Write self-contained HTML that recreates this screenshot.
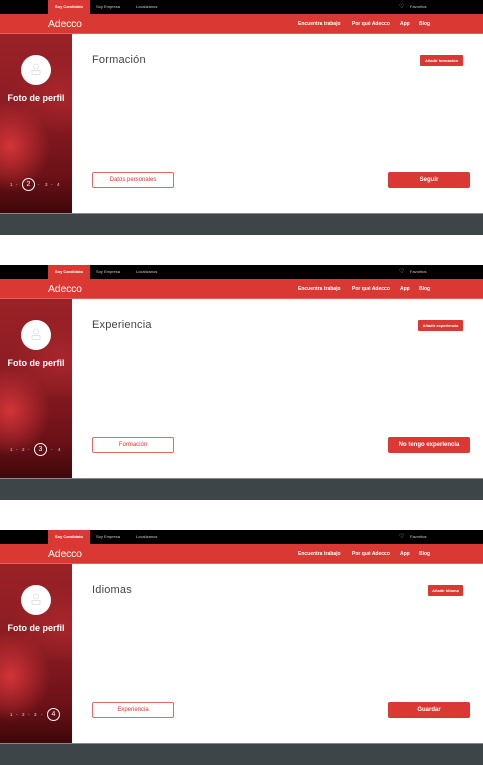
<!DOCTYPE html>
<html><head><meta charset="utf-8"><style>
*{margin:0;padding:0;box-sizing:border-box}
body{width:483px;height:765px;background:#fff;position:relative;overflow:hidden;font-family:"Liberation Sans",sans-serif}
.s{position:absolute;left:0;width:483px;height:235px}
.a{position:absolute;white-space:nowrap}
.top{left:0;top:0;width:483px;height:14px;background:#000}
.tab{left:48px;top:0;width:42px;height:14px;background:#da3832;color:#fff;font-size:4px;font-weight:bold;text-align:center;line-height:14px}
.tl{color:#ccc;font-size:4px;top:0;line-height:14px}
.nav{left:0;top:14px;width:483px;height:20px;background:#da3832;border-bottom:1px solid #e9605a}
.nl{color:#fff;font-size:5px;font-weight:bold;top:14px;line-height:20px}
.logo{left:48px;top:14px;line-height:20px;color:#fff;font-size:10.5px;letter-spacing:-0.2px}
.side{left:0;top:34px;width:72px;height:179px;background:radial-gradient(ellipse 40px 45px at 10px 112px,#d23438 0%,rgba(200,40,45,0) 100%),radial-gradient(ellipse 50px 40px at 62px 60px,#a8262b 0%,rgba(160,30,35,0) 100%),linear-gradient(180deg,#9a2227 0%,#8a1c22 45%,#6a1117 80%,#3e070b 100%)}
.av{left:21px;top:55px;width:30px;height:30px;border-radius:50%;background:#fff}
.fp{left:0;width:72px;top:93px;text-align:center;color:#fff;font-size:9px;font-weight:bold}
.d{top:182px;color:#ddd;font-size:4.5px;line-height:6px}
.ci{width:13px;height:13px;border:1px solid #fff;border-radius:50%;color:#fff;font-size:7px;text-align:center;line-height:11px;top:178px}
.ti{left:92px;top:54px;font-size:11px;color:#444;letter-spacing:.2px}
.add{top:55px;height:11px;background:#da3832;border-radius:1px;color:#fff;font-size:4px;font-weight:bold;line-height:11px;text-align:center}
.b1{left:92px;top:172px;width:82px;height:16px;border:1px solid #e06a66;border-radius:2px;color:#da3832;font-size:6px;text-align:center;line-height:14px}
.b2{left:388px;top:172px;width:82px;height:16px;background:#da3832;border-radius:2px;color:#fff;font-size:6px;font-weight:bold;text-align:center;line-height:16px}
.gr{left:0;top:213px;width:483px;height:22px;background:#3e4549;border-top:1px solid #888}
.ic{left:31px;top:63px}
</style></head><body>

<!-- screen 1 -->
<div class="s" style="top:0">
<div class="a top"></div><div class="a tab">Soy Candidato</div>
<div class="a tl" style="left:96px">Soy Empresa</div><div class="a tl" style="left:136px">Localízanos</div>
<div class="a tl" style="left:399px;font-size:6px">♡</div><div class="a tl" style="left:410px">Favoritos</div>
<div class="a nav"></div>
<div class="a logo">Adecco</div>
<div class="a nl" style="left:298px">Encuentra trabajo</div><div class="a nl" style="left:352px">Por qué Adecco</div><div class="a nl" style="left:400px">App</div><div class="a nl" style="left:419px">Blog</div>
<div class="a side"></div><div class="a av"></div>
<svg class="a ic" width="10" height="13" viewBox="0 0 10 13" fill="none" stroke="#ddd" stroke-width="0.8"><circle cx="5" cy="3.5" r="2.5"/><rect x="1" y="7.5" width="8" height="4"/></svg>
<div class="a fp">Foto de perfil</div>
<div class="a d" style="left:10px">1</div><div class="a d" style="left:16px">-</div><div class="a ci" style="left:22px">2</div><div class="a d" style="left:38px">-</div><div class="a d" style="left:45px">3</div><div class="a d" style="left:51px">-</div><div class="a d" style="left:57px">4</div>
<div class="a ti">Formación</div>
<div class="a add" style="left:420px;width:43px">Añadir formación</div>
<div class="a b1">Datos personales</div><div class="a b2">Seguir</div>
<div class="a gr"></div>
</div>

<!-- screen 2 -->
<div class="s" style="top:265px">
<div class="a top"></div><div class="a tab">Soy Candidato</div>
<div class="a tl" style="left:96px">Soy Empresa</div><div class="a tl" style="left:136px">Localízanos</div>
<div class="a tl" style="left:399px;font-size:6px">♡</div><div class="a tl" style="left:410px">Favoritos</div>
<div class="a nav"></div>
<div class="a logo">Adecco</div>
<div class="a nl" style="left:298px">Encuentra trabajo</div><div class="a nl" style="left:352px">Por qué Adecco</div><div class="a nl" style="left:400px">App</div><div class="a nl" style="left:419px">Blog</div>
<div class="a side"></div><div class="a av"></div>
<svg class="a ic" width="10" height="13" viewBox="0 0 10 13" fill="none" stroke="#ddd" stroke-width="0.8"><circle cx="5" cy="3.5" r="2.5"/><rect x="1" y="7.5" width="8" height="4"/></svg>
<div class="a fp">Foto de perfil</div>
<div class="a d" style="left:10px">1</div><div class="a d" style="left:16px">-</div><div class="a d" style="left:22px">2</div><div class="a d" style="left:28px">-</div><div class="a ci" style="left:34px">3</div><div class="a d" style="left:51px">-</div><div class="a d" style="left:58px">4</div>
<div class="a ti">Experiencia</div>
<div class="a add" style="left:418px;width:45px">Añadir experiencia</div>
<div class="a b1">Formación</div><div class="a b2">No tengo experiencia</div>
<div class="a gr"></div>
</div>

<!-- screen 3 -->
<div class="s" style="top:530px">
<div class="a top"></div><div class="a tab">Soy Candidato</div>
<div class="a tl" style="left:96px">Soy Empresa</div><div class="a tl" style="left:136px">Localízanos</div>
<div class="a tl" style="left:399px;font-size:6px">♡</div><div class="a tl" style="left:410px">Favoritos</div>
<div class="a nav"></div>
<div class="a logo">Adecco</div>
<div class="a nl" style="left:298px">Encuentra trabajo</div><div class="a nl" style="left:352px">Por qué Adecco</div><div class="a nl" style="left:400px">App</div><div class="a nl" style="left:419px">Blog</div>
<div class="a side"></div><div class="a av"></div>
<svg class="a ic" width="10" height="13" viewBox="0 0 10 13" fill="none" stroke="#ddd" stroke-width="0.8"><circle cx="5" cy="3.5" r="2.5"/><rect x="1" y="7.5" width="8" height="4"/></svg>
<div class="a fp">Foto de perfil</div>
<div class="a d" style="left:10px">1</div><div class="a d" style="left:16px">-</div><div class="a d" style="left:22px">2</div><div class="a d" style="left:28px">-</div><div class="a d" style="left:34px">3</div><div class="a d" style="left:41px">-</div><div class="a ci" style="left:47px">4</div>
<div class="a ti">Idiomas</div>
<div class="a add" style="left:428px;width:35px">Añadir idioma</div>
<div class="a b1">Experiencia</div><div class="a b2">Guardar</div>
<div class="a gr"></div>
</div>

</body></html>
